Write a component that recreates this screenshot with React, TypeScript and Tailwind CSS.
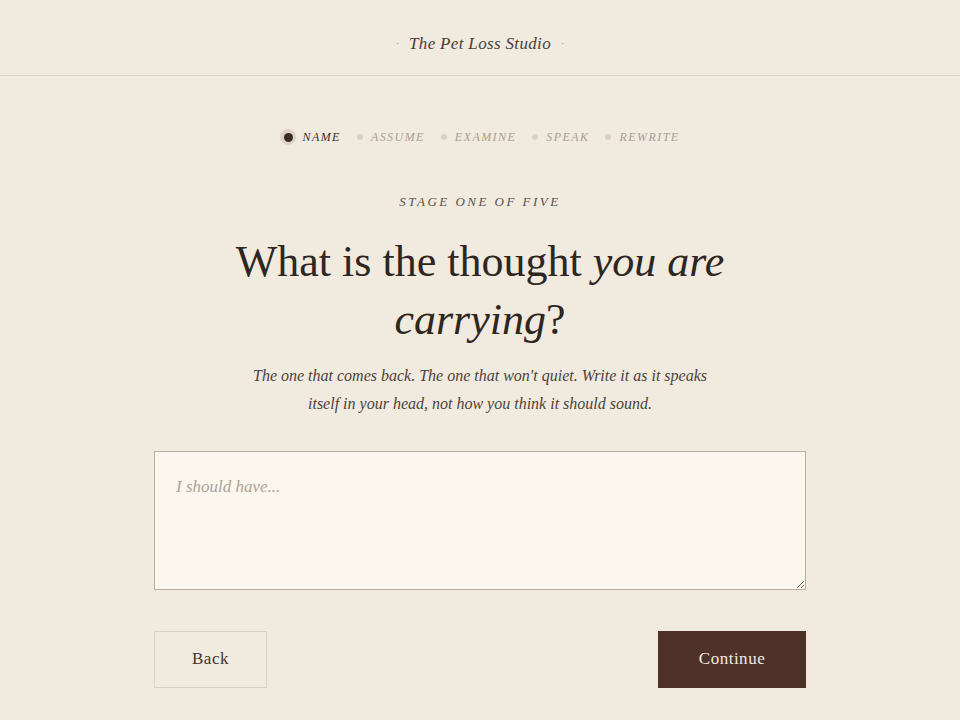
import React from "react";

const serif = { fontFamily: '"Liberation Serif", "DejaVu Serif", serif' };

const steps = ["NAME", "ASSUME", "EXAMINE", "SPEAK", "REWRITE"];

export default function App() {
  return (
    <div
      className="min-h-[720px] w-full bg-[#f1eadf] text-[#2e2620]"
      style={serif}
    >
      <header className="flex h-[76px] items-center justify-center border-b border-[#dcd3c6] pt-[12px]">
        <div className="flex items-center gap-[10px] text-[#4a3f37]">
          <span className="text-[10px] text-[#8a8075]">·</span>
          <span className="text-[17px] italic tracking-[0.02em]">The Pet Loss Studio</span>
          <span className="text-[10px] text-[#8a8075]">·</span>
        </div>
      </header>

      <main className="mx-auto flex w-[652px] flex-col items-center">
        <nav className="mt-[52px] flex items-center gap-[14px]">
          {steps.map((s, i) => (
            <div key={s} className="flex items-center gap-[6px]">
              {i === 0 ? (
                <span className="flex h-[16px] w-[16px] items-center justify-center rounded-full bg-[#ddd3c7]">
                  <span className="h-[9px] w-[9px] rounded-full bg-[#3a2c25]" />
                </span>
              ) : (
                <span className="mx-[2px] h-[6px] w-[6px] rounded-full bg-[#d9d1c6]" />
              )}
              <span
                className={
                  "text-[12px] italic tracking-[0.12em] " +
                  (i === 0 ? "text-[#3a2f28]" : "text-[#a89e93]")
                }
              >
                {s}
              </span>
            </div>
          ))}
        </nav>

        <div className="mt-[46px] text-[13px] italic tracking-[0.19em] text-[#5b5048]">
          STAGE ONE OF FIVE
        </div>

        <h1 className="mt-[21px] text-center text-[44px] font-normal leading-[58px] text-[#2e2620]">
          What is the thought <em>you are</em>
          <br />
          <em>carrying</em>?
        </h1>

        <p className="mt-[13px] text-center text-[16px] italic leading-[28px] text-[#4d423a]">
          The one that comes back. The one that won't quiet. Write it as it speaks
          <br />
          itself in your head, not how you think it should sound.
        </p>

        <textarea
          className="mt-[33px] h-[139px] w-full resize-y border border-[#b7ada2] bg-[#fbf6ee] px-[21px] py-[22px] text-[17px] italic text-[#3a2f28] outline-none placeholder:text-[#aba397]"
          style={serif}
          placeholder="I should have..."
        />

        <div className="mt-[41px] flex w-full items-center justify-between">
          <button className="h-[57px] w-[113px] border border-[#d9d0c4] bg-transparent text-[17px] tracking-[0.03em] text-[#3f352e]">
            Back
          </button>
          <button className="h-[57px] w-[148px] bg-[#4e3129] text-[17px] tracking-[0.03em] text-[#f3ece2]">
            Continue
          </button>
        </div>
      </main>
    </div>
  );
}
